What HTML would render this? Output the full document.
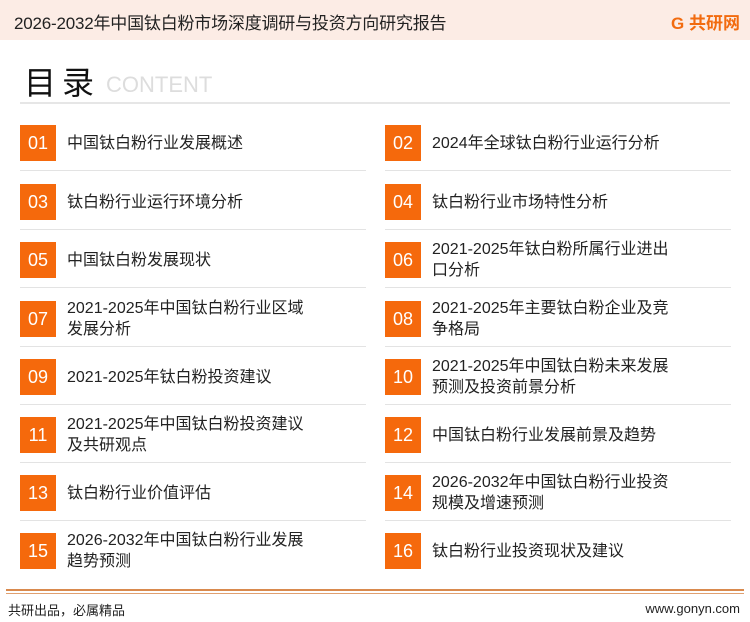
<!DOCTYPE html>
<html><head><meta charset="utf-8"><style>
*{margin:0;padding:0;box-sizing:border-box}
body{width:750px;height:622px;background:#fff;position:relative;overflow:hidden;font-family:"Liberation Sans","Noto Sans CJK SC",sans-serif;color:#222}
.hd{position:absolute;left:0;top:0;width:750px;height:40px;background:#fcece5}
.hd .t{position:absolute;left:14px;top:9px;font-size:17px;color:#222;letter-spacing:-0.2px}
.hd .lg{position:absolute;right:10px;top:9px;font-size:17px;font-weight:bold;color:#f26b0f}
.ttl{position:absolute;left:24px;top:58px;font-size:32px;color:#111;letter-spacing:6px}
.ct{position:absolute;left:106px;top:72px;font-size:22px;color:#ddd}
.ln{position:absolute;left:20px;top:102px;width:710px;height:2px;background:#e6e6e6}
.it{position:absolute;width:346px;height:58px}
.it .n{position:absolute;left:0;top:5px;width:36px;height:36px;background:#f5690c;color:#fff;font-size:18px;text-align:center;line-height:36px}
.it .x{position:absolute;left:47px;top:0;height:46px;display:flex;align-items:center;font-size:16px;line-height:21px;width:300px}
.it .s{position:absolute;left:0;top:50px;width:346px;height:1px;background:#e3e3e3}
.f1{position:absolute;left:6px;top:589px;width:738px;height:2px;background:#d98a4e}
.f2{position:absolute;left:6px;top:593px;width:738px;height:1px;background:#e0a070}
.ft{position:absolute;left:8px;top:600px;font-size:13px}
.fr{position:absolute;right:10px;top:601px;font-size:13px}
</style></head><body>
<div class="hd"><div class="t">2026-2032年中国钛白粉市场深度调研与投资方向研究报告</div><div class="lg">G 共研网</div></div>
<div class="ttl">目录</div><div class="ct">CONTENT</div>
<div class="ln"></div>
<div class="it" style="left:20px;top:120px"><div class="n">01</div><div class="x">中国钛白粉行业发展概述</div><div class="s"></div></div>
<div class="it" style="left:385px;top:120px"><div class="n">02</div><div class="x">2024年全球钛白粉行业运行分析</div><div class="s"></div></div>
<div class="it" style="left:20px;top:179px"><div class="n">03</div><div class="x">钛白粉行业运行环境分析</div><div class="s"></div></div>
<div class="it" style="left:385px;top:179px"><div class="n">04</div><div class="x">钛白粉行业市场特性分析</div><div class="s"></div></div>
<div class="it" style="left:20px;top:237px"><div class="n">05</div><div class="x">中国钛白粉发展现状</div><div class="s"></div></div>
<div class="it" style="left:385px;top:237px"><div class="n">06</div><div class="x">2021-2025年钛白粉所属行业进出<br>口分析</div><div class="s"></div></div>
<div class="it" style="left:20px;top:296px"><div class="n">07</div><div class="x">2021-2025年中国钛白粉行业区域<br>发展分析</div><div class="s"></div></div>
<div class="it" style="left:385px;top:296px"><div class="n">08</div><div class="x">2021-2025年主要钛白粉企业及竞<br>争格局</div><div class="s"></div></div>
<div class="it" style="left:20px;top:354px"><div class="n">09</div><div class="x">2021-2025年钛白粉投资建议</div><div class="s"></div></div>
<div class="it" style="left:385px;top:354px"><div class="n">10</div><div class="x">2021-2025年中国钛白粉未来发展<br>预测及投资前景分析</div><div class="s"></div></div>
<div class="it" style="left:20px;top:412px"><div class="n">11</div><div class="x">2021-2025年中国钛白粉投资建议<br>及共研观点</div><div class="s"></div></div>
<div class="it" style="left:385px;top:412px"><div class="n">12</div><div class="x">中国钛白粉行业发展前景及趋势</div><div class="s"></div></div>
<div class="it" style="left:20px;top:470px"><div class="n">13</div><div class="x">钛白粉行业价值评估</div><div class="s"></div></div>
<div class="it" style="left:385px;top:470px"><div class="n">14</div><div class="x">2026-2032年中国钛白粉行业投资<br>规模及增速预测</div><div class="s"></div></div>
<div class="it" style="left:20px;top:528px"><div class="n">15</div><div class="x">2026-2032年中国钛白粉行业发展<br>趋势预测</div></div>
<div class="it" style="left:385px;top:528px"><div class="n">16</div><div class="x">钛白粉行业投资现状及建议</div></div>
<div class="f1"></div><div class="f2"></div>
<div class="ft">共研出品，必属精品</div><div class="fr">www.gonyn.com</div>
</body></html>
